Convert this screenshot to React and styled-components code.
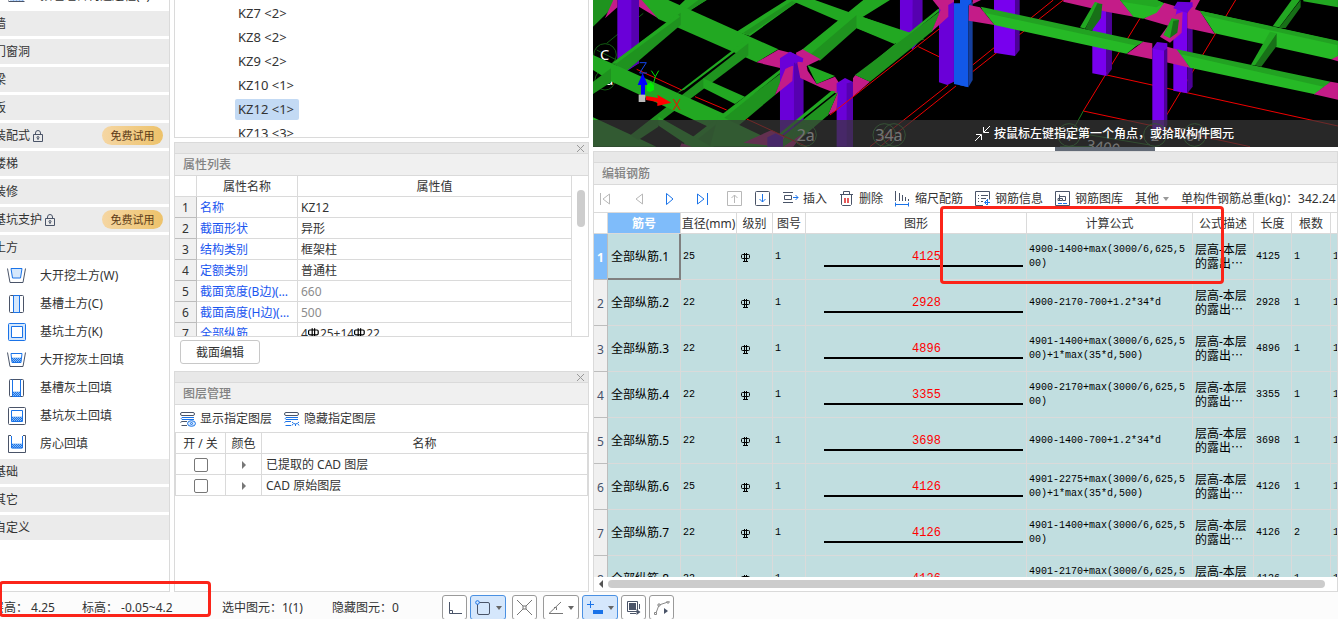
// src/App.jsx
import { useState } from 'react';
import styled, { createGlobalStyle } from 'styled-components';

const fonts = {
  ui: '"Noto Sans", "Noto Sans CJK SC", sans-serif',
  mono: '"Liberation Mono", "Noto Sans CJK SC", monospace',
};

const colors = {
  line: '#dadada',
  strip: '#e8e8e8',
  caption: '#f0f0f0',
  text: '#333333',
  link: '#1a56f0',
  blue: '#1a73e8',
  ink: '#4a5468',
  cell: '#c1dee0',
  mark: '#fb2419',
};

const GlobalStyle = createGlobalStyle`
  * { box-sizing: border-box; }
  body {
    margin: 0;
    background: #ffffff;
    color: ${colors.text};
    font-family: ${fonts.ui};
    font-size: 12px;
    line-height: 18px;
    overflow: hidden;
  }
  button, input { font: inherit; color: inherit; margin: 0; }
  button { cursor: pointer; }
  svg { display: block; flex: none; }
`;

const Page = styled.div`
  position: relative;
  height: 100vh;
  display: flex;
  flex-direction: column;
  overflow: hidden;
`;

const Main = styled.main`
  flex: 1;
  min-height: 0;
  display: grid;
  grid-template-columns: 170px 415px minmax(0, 1fr);
  grid-template-rows: minmax(0, 1fr);
  column-gap: 4px;
`;

const Column = styled.div`
  display: flex;
  flex-direction: column;
  min-width: 0;
  min-height: 0;
`;

/* component tree on the left */

const Sidebar = styled.nav`
  border-right: 1px solid ${colors.line};
  border-bottom: 1px solid ${colors.line};
  overflow: hidden;
`;

const SideList = styled.div`
  margin: -17px 0 0 -20px;
`;

const Category = styled.div`
  height: 25px;
  margin-bottom: 3px;
  padding: 0 6px 0 14px;
  display: flex;
  align-items: center;
  gap: 3px;
  background: #ebebeb;
`;

const Trial = styled.button`
  margin-left: auto;
  width: 61px;
  height: 19px;
  padding: 0;
  border: none;
  border-radius: 10px;
  background: linear-gradient(90deg, #f5d6a3, #edc26a);
  color: #5c3a17;
  font-size: 11px;
  line-height: 18px;
`;

const Tool = styled.button`
  height: 28px;
  width: 100%;
  padding: 0 0 3px 27px;
  border: none;
  background: none;
  display: flex;
  align-items: center;
  gap: 14px;
  text-align: left;
  white-space: nowrap;
`;

/* docked panels */

const Panel = styled.section`
  flex: ${props => props.$height ? `0 0 ${props.$height}px` : '1'};
  min-height: 0;
  display: flex;
  flex-direction: column;
  border: 1px solid ${colors.line};
  overflow: hidden;
`;

const Strip = styled.div`
  flex: none;
  height: 11px;
  padding-right: 4px;
  display: flex;
  align-items: center;
  justify-content: flex-end;
  background: ${colors.strip};
  border-bottom: 1px solid ${colors.line};
`;

const CloseButton = styled.button`
  padding: 0;
  border: none;
  background: none;
  color: #999999;
`;

const Caption = styled.h2`
  flex: none;
  height: 22px;
  margin: 0;
  padding-left: 8px;
  background: ${colors.caption};
  border-bottom: 1px solid ${colors.line};
  color: #828282;
  font-size: 12px;
  font-weight: 500;
  line-height: 22px;
`;

const TreePanel = styled.ul`
  flex: 0 0 138px;
  margin: 0 0 4px;
  padding: 1px 0 0 60px;
  border: 1px solid ${colors.line};
  border-top: none;
  list-style: none;
  overflow: hidden;
`;

const TreeItem = styled.li`
  height: 24px;
  display: flex;
  align-items: center;
  font-size: 13px;

  span {
    height: 21px;
    padding: 0 5px 0 3px;
    border-radius: 2px;
    background: ${props => props.$selected ? '#c3daf4' : 'none'};
    line-height: 21px;
  }
`;

const ScrollArea = styled.div`
  flex: 1;
  min-height: 0;
  display: flex;
  overflow: hidden;
`;

const Grid = styled.table`
  flex: 1;
  align-self: flex-start;
  width: 100%;
  table-layout: fixed;
  border-spacing: 0;

  th, td {
    height: 21px;
    padding: 1px 3px 0;
    border-right: 1px solid ${colors.line};
    border-bottom: 1px solid ${colors.line};
    font-weight: 400;
    line-height: 19px;
    white-space: nowrap;
    overflow: hidden;
    text-overflow: ellipsis;
  }
`;

const RowNumber = styled.td`
  background: ${colors.caption};
  border-color: #bdbdbd !important;
  text-align: center;
`;

const PropName = styled.td`
  color: ${colors.link};
`;

const PropValue = styled.td`
  color: ${props => props.$muted ? '#8c8c8c' : colors.text};

  svg { display: inline-block; vertical-align: -1px; }
`;

const VerticalScroll = styled.div`
  flex: 0 0 16px;
  padding: 14px 3px 0 5px;

  &::before {
    content: '';
    display: block;
    height: 37px;
    border-radius: 4px;
    background: #cdcdcd;
  }
`;

const ActionBar = styled.div`
  flex: none;
  height: 34px;
  padding: 3px 6px 0;
`;

const PlainButton = styled.button`
  width: 80px;
  height: 24px;
  padding: 1px 0 0;
  border: 1px solid #c8c8c8;
  border-radius: 3px;
  background: #ffffff;
`;

const Toolbar = styled.div`
  flex: none;
  height: 28px;
  padding: 1px 5px 0;
  display: flex;
  align-items: center;
  gap: 12px;
  border-bottom: 1px solid ${colors.line};
  white-space: nowrap;
  overflow: hidden;
`;

const Pager = styled.div`
  display: flex;
  gap: 16px;
`;

const ToolButton = styled.button`
  flex: none;
  padding: 0;
  border: none;
  background: none;
  display: flex;
  align-items: center;
  gap: 4px;
`;

const LayerGrid = styled(Grid)`
  flex: none;
  align-self: stretch;
  border-left: 1px solid ${colors.line};
`;

const CenterCell = styled.td`
  text-align: center;

  svg { margin: 0 auto; }
`;

const LayerName = styled.td`
  && { padding-left: 4px; }
`;

const CheckBox = styled.input`
  appearance: none;
  display: block;
  width: 14px;
  height: 14px;
  margin: 0 auto;
  border: 1px solid #777777;
  border-radius: 2px;
  background: #ffffff;

  &:checked { background: ${colors.blue}; }
`;

/* model view */

const Viewport = styled.div`
  flex: 0 0 147px;
  position: relative;
  background: #000000;
  overflow: hidden;

  > svg { width: 100%; height: 147px; }
`;

const Hint = styled.div`
  position: absolute;
  left: 0;
  right: 0;
  bottom: 0;
  height: 27px;
  padding-left: 381px;
  display: flex;
  align-items: center;
  gap: 3px;
  background: rgba(57, 57, 57, 0.7);
  color: #ffffff;
  font-weight: 500;
  white-space: nowrap;
`;

const Splitter = styled.div`
  flex: 0 0 4px;
  width: 100px;
  margin-left: 462px;
  background: #626a76;
`;

/* rebar table */

const RebarGrid = styled.table`
  width: 790px;
  table-layout: fixed;
  border-spacing: 0;

  th {
    height: 21px;
    padding: 1px 0 0;
    border-right: 1px solid ${colors.line};
    border-bottom: 1px solid ${colors.line};
    font-weight: 400;
    line-height: 19px;
    white-space: nowrap;
  }

  td {
    height: 46px;
    padding: 0 2px;
    border-right: 1px solid ${colors.line};
    border-bottom: 1px solid ${colors.line};
    background: ${colors.cell};
    color: #000000;
    overflow: hidden;
  }
`;

const ActiveHead = styled.th`
  background: #7fbcfa;
  color: #ffffff;
  font-weight: 700 !important;
`;

const Index = styled.th`
  && {
    height: 46px;
    border-color: #bdbdbd;
    background: ${props => props.$active ? '#7fbcfa' : colors.caption};
    color: ${props => props.$active ? '#ffffff' : '#44506a'};
    font-weight: ${props => props.$active ? 700 : 400};
    font-size: 12px;
  }
`;

const BarName = styled.td`
  && {
    padding: 0 3px;
    border-color: ${props => props.$active ? '#808080' : colors.line};
    box-shadow: ${props => props.$active ? 'inset -1px -1px 0 #808080' : 'none'};
    white-space: nowrap;
  }
`;

const Mono = styled.td`
  font-family: ${fonts.mono};
  font-size: 10px;
  line-height: 14px;
  word-break: break-all;
`;

const GradeCell = styled.td`
  && { padding-left: 4px; }
`;

const ShapeCell = styled.td`
  && { padding: 0 3px 0 18px; }
`;

const BarShape = styled.div`
  height: 20px;
  padding-left: 6px;
  border-bottom: 2px solid #000000;
  color: #ff0000;
  font-family: ${fonts.mono};
  font-size: 12px;
  line-height: 20px;
  text-align: center;
`;

const Description = styled.td`
  font-size: 12px;
  line-height: 14px;
`;

const HorizontalScroll = styled.div`
  flex: 0 0 14px;
  padding: 0 12px 0 5px;
  display: flex;
  align-items: center;
  gap: 5px;

  &::after {
    content: '';
    flex: 1;
    height: 8px;
    border-radius: 4px;
    background: #cccccc;
  }
`;

/* status bar */

const StatusBar = styled.footer`
  flex: 0 0 27px;
  padding-top: 3px;
  display: flex;
  background: #fcfcfc;
  line-height: 26px;
  white-space: nowrap;
  overflow: hidden;
`;

const Status = styled.span`
  flex: 0 0 ${props => props.$width}px;
`;

const StatusShift = styled.div`
  display: flex;
  flex: none;
  margin-left: -8px;
`;

const SnapBar = styled.div`
  display: flex;
  gap: 6px;
`;

const SnapGroup = styled.div`
  display: flex;
  gap: 3px;
`;

const SnapButton = styled.button`
  width: ${props => props.$menu ? 36 : 25}px;
  height: 25px;
  padding: 0;
  display: flex;
  align-items: center;
  justify-content: center;
  gap: 5px;
  border: 1px solid ${props => props.$on ? '#4a90e2' : '#9a9a9a'};
  border-radius: 3px;
  background: ${props => props.$on ? '#d5e7fc' : '#ffffff'};
`;

const Marker = styled.div`
  position: absolute;
  border: 3px solid ${colors.mark};
  border-radius: 4px;
  pointer-events: none;
`;

const FormulaMarker = styled(Marker)`
  left: 940px;
  top: 206px;
  width: 284px;
  height: 78px;
`;

const LevelMarker = styled(Marker)`
  left: -1px;
  bottom: 2px;
  width: 212px;
  height: 36px;
`;

const categories = [
  { name: '墙' },
  { name: '门窗洞' },
  { name: '梁' },
  { name: '板' },
  { name: '装配式', locked: true },
  { name: '楼梯' },
  { name: '装修' },
  { name: '基坑支护', locked: true },
  { name: '土方' },
];

const earthTools = [
  { name: '大开挖土方(W)', icon: 'pitOpen' },
  { name: '基槽土方(C)', icon: 'trench' },
  { name: '基坑土方(K)', icon: 'pit' },
  { name: '大开挖灰土回填', icon: 'pitOpenFill' },
  { name: '基槽灰土回填', icon: 'trenchFill' },
  { name: '基坑灰土回填', icon: 'pitFill' },
  { name: '房心回填', icon: 'room' },
];

const columns = ['KZ7 <2>', 'KZ8 <2>', 'KZ9 <2>', 'KZ10 <1>', 'KZ12 <1>', 'KZ13 <3>'];

const properties = [
  { name: '名称', value: 'KZ12' },
  { name: '截面形状', value: '异形' },
  { name: '结构类别', value: '框架柱' },
  { name: '定额类别', value: '普通柱' },
  { name: '截面宽度(B边)(mm)', value: '660', muted: true },
  { name: '截面高度(H边)(mm)', value: '500', muted: true },
];

const rebars = [
  { d: 25, length: 4125, formula: '4900-1400+max(3000/6,625,500)', count: 1 },
  { d: 22, length: 2928, formula: '4900-2170-700+1.2*34*d', count: 1 },
  { d: 22, length: 4896, formula: '4901-1400+max(3000/6,625,500)+1*max(35*d,500)', count: 1 },
  { d: 22, length: 3355, formula: '4900-2170+max(3000/6,625,500)', count: 1 },
  { d: 22, length: 3698, formula: '4900-1400-700+1.2*34*d', count: 1 },
  { d: 25, length: 4126, formula: '4901-2275+max(3000/6,625,500)+1*max(35*d,500)', count: 1 },
  { d: 22, length: 4126, formula: '4901-1400+max(3000/6,625,500)', count: 2 },
  { d: 22, length: 4126, formula: '4901-2170+max(3000/6,625,500)+1*max(35*d,500)', count: 1 },
];

const Lock = () => (
  <svg width="10" height="12" viewBox="0 0 10 12" fill="none" stroke={colors.ink}>
    <path d="M.5 4.5h9v7h-9zM2.5 4.5V3a2.5 2.5 0 0 1 5 0v1.5M5 8v2" />
    <circle cx="5" cy="7.5" r="1" />
  </svg>
);

const Hatch = ({ x, y, w }) => (
  <>
    <path d={`M${x} ${y - 1}h${w}v5h-${w}z`} fill="#8bbcf5" stroke="none" />
    <path
      d={`M${x} ${y}h${w}M${x + 1} ${y + 1}h${w - 1}M${x} ${y + 2}h${w}M${x + 1} ${y + 3}h${w - 1}`}
      stroke={colors.blue}
      strokeDasharray="1 1"
    />
  </>
);

function ToolIcon({ type }) {
  return (
    <svg width="19" height="18" viewBox="0 0 19 18" fill="none" stroke={colors.ink}>
      {type === 'pitOpen' && (
        <>
          <path d="M.5 1.500L3 15.500h13L18.500 1.500" />
          <path d="M4 1.500h11l-1.500 9.500h-8z" fill="#d6e8fc" stroke={colors.blue} />
        </>
      )}
      {type === 'trench' && (
        <>
          <rect x="2.500" y=".5" width="14" height="17" rx="1" />
          <path d="M6.500.5h6v17h-6z" fill="#d6e8fc" stroke={colors.blue} />
        </>
      )}
      {type === 'pit' && (
        <g stroke={colors.blue}>
          <rect x="1.500" y=".5" width="17" height="17" rx="1" fill="#d6e8fc" />
          <path d="M4.500 3.500h11v11h-11z" fill="#fff" />
        </g>
      )}
      {type === 'pitOpenFill' && (
        <>
          <path d="M.5 1.500L3 15.500h13L18.500 1.500" />
          <Hatch x={5} y={7.5} w={9} />
          <path d="M4 2.500h11l-1 9H5z" stroke={colors.blue} />
        </>
      )}
      {type === 'trenchFill' && (
        <>
          <rect x="2.500" y=".5" width="14" height="17" rx="1" />
          <Hatch x={6} y={13.5} w={7} />
          <path d="M5.500.5v17h8V.5" stroke={colors.blue} />
        </>
      )}
      {type === 'pitFill' && (
        <>
          <rect x="1.500" y=".5" width="17" height="17" rx="1" />
          <Hatch x={5} y={10.5} w={10} />
          <path d="M4.500 3.500h11v11h-11z" stroke={colors.blue} />
        </>
      )}
      {type === 'room' && (
        <>
          <path d="M4 .5H1.500v17h17V.5H16" />
          <Hatch x={5} y={9.5} w={10} />
          <path d="M4.500 1v12h11V1" stroke={colors.blue} />
        </>
      )}
      {type === 'solid' && (
        <>
          <path d="M3 3h13v9H3z" fill="#8bbcf5" stroke="none" />
          <path d="M3 9.500h13M4 10.500h13M3 11.500h13M3.500 3v10h13V3" stroke={colors.blue} strokeDasharray="2 1" />
          <path d="M1.500 3v10.500M1.500 14.500h16" />
        </>
      )}
    </svg>
  );
}

// HRB400 rebar grade sign
const Grade = ({ size = 10 }) => (
  <svg width={size} height={size} viewBox="0 0 10 10" fill="none" stroke="#000">
    <rect x=".5" y="2.500" width="8" height="4" rx="1" />
    <path d="M3.500 1v8M5.500 1v8M2 9.500h5" />
  </svg>
);

const Caret = ({ color = '#666666' }) => (
  <svg width="6" height="4" viewBox="0 0 6 4"><path d="M0 0h6L3 4z" fill={color} /></svg>
);

const Close = () => (
  <svg width="7" height="7" viewBox="0 0 7 7" stroke="currentColor"><path d="M0 0l7 7M7 0L0 7" /></svg>
);

const Layers = ({ hidden }) => (
  <svg width="16" height="15" viewBox="0 0 16 15" fill="none" stroke={colors.ink}>
    <rect x=".5" y=".5" width="14" height="3" rx="1.500" />
    <path d="M14 5.500H2q-1.500 1 0 2h12" stroke={colors.blue} />
    <path d="M7 9.500H2q-1.500.5-1.500 1M7 13.500H1.500" stroke={hidden ? colors.blue : colors.ink} />
    {hidden
      ? <path d="M8 10q3.500 4 7 0M9 12l-1 1.500M11.500 12v2M14 12l1 1.500" stroke={colors.blue} />
      : <g stroke={colors.blue}><ellipse cx="11.500" cy="11.500" rx="4" ry="2.800" fill="#d6e8fc" /><circle cx="11.500" cy="11.500" r="1" /></g>}
  </svg>
);

const pagerIcons = [
  { label: '首条', stroke: '#b8b8b8', d: 'M1.500 2v12M10.500 3v10L4 8z' },
  { label: '上一条', stroke: '#b8b8b8', d: 'M11.500 3v10L5 8z' },
  { label: '下一条', stroke: colors.blue, d: 'M3.500 2.500v11L10 8z' },
  { label: '末条', stroke: colors.blue, d: 'M2.500 3v10L9 8zM12.500 2v12' },
  { label: '上移', stroke: '#b8b8b8', d: 'M.5.5h14v14H.5zM7.500 12V4M4.500 7l3-3 3 3' },
];

const rebarActions = [
  {
    label: '插入',
    icon: (
      <>
        <path d="M0 1.500h10M0 11.500h10M1.500 4.500h7v4h-7z" />
        <path d="M10 6.500h5M12.500 4l2.500 2.500L12.500 9" stroke={colors.blue} />
      </>
    ),
  },
  {
    label: '删除',
    icon: (
      <>
        <path d="M1 3.500h13M4.500 3.500v-3h6v3M2.500 3.500v10l1 1h8l1-1v-10" />
        <path d="M6 7v5M9 7v5" stroke="#d22" strokeWidth="1.500" />
      </>
    ),
  },
  {
    label: '缩尺配筋',
    icon: (
      <>
        <path d="M.5 0v10M4.500 2v8M7.500 4v6M10.500 6v4M13.500 8v2" />
        <path d="M1 13.500h13M.5 11.500v4M13.500 11.500v4" stroke={colors.blue} />
      </>
    ),
  },
  {
    label: '钢筋信息',
    icon: (
      <>
        <path d="M8 14.500H.5V.5h14v8M3 4.500h1M6 4.500h7M3 7.500h1M6 7.500h5M3 10.500h1M6 10.500h2" />
        <path d="M12.500 8v6M15 11.500h-5M12 9l-2.500 2.500L12 14" stroke={colors.blue} />
      </>
    ),
  },
  {
    label: '钢筋图库',
    icon: (
      <>
        <path d="M.5.5h14v14H.5zM4.500 9.500V3.500M4.500 5.500h6v4h-2.500M3 7.500h4.500v2H3z" />
        <path d="M3 12.500h4M8 12.500h4" stroke={colors.blue} />
      </>
    ),
  },
];

// Structural frame seen from above; each half keeps its own drawing units
function Model() {
  const green = '#22a822';
  const side = '#1f931f';
  const bright = '#26b926';
  const deep = '#187018';
  const joint = '#c41c88';
  const violet = '#6a00d8';
  const violetSide = '#5600b0';
  const column = '#7800ee';
  const columnSide = '#4c0096';

  return (
    <svg viewBox="0 0 745 147" preserveAspectRatio="xMinYMin slice" role="img" aria-label="三维模型">
      <g transform="translate(-3 0) scale(.3333)">
        <g fill="none" stroke="#125a12" strokeWidth="3">
          <circle cx="45" cy="165" r="34" />
          <circle cx="45" cy="240" r="30" />
          <path d="M50 130l110-90M20 150l60 30" />
        </g>
        <g fill="#fff" fontFamily="Noto Sans" fontSize="44">
          <text x="30" y="181">C</text>
          <text x="46" y="256">a</text>
        </g>
        <path fill={violet} d="M82 0h65v190l-35 22-30-10z" />
        <path fill={violetSide} d="M124 0h23v190l-23 12z" />
        <path fill={side} d="M0 0h45L0 40zM9 25L45 0h30L55 35 9 80z" />
        <path fill={joint} d="M70 0h12v22L45 55zM147 0h38l23 57-61-37z" />
        <path fill={green} d="M262 22L285 0h65l-70 45zM440 95L590 0h40L480 108z" />
        <path fill={side} d="M300 30L350 0h-25l-50 38zM475 105L630 0h-20L460 98z" />
        <path fill={green} d="M155 0h80l330 148-65 39-295-130z" />
        <path fill={side} d="M272 38v37L110 213 65 190z" />
        <path fill={green} d="M262 42l8 8L80 190l-12-2z" />
        <path fill={side} d="M475 130v36L150 410h-35z" />
        <path fill={green} d="M470 128L285 268l-25 12 205-158z" />
        <path fill={green} d="M340 235l125 55-30 22-95-48zM9 165l56 25 345 155-55 35-290-135-56-35z" />
        <path fill={side} d="M9 245l54-40v42L9 282z" />
        <path fill={side} d="M589 208l-34 77-185 155h-90z" />
        <path fill={green} d="M575 205l10 3-290 232h-25z" />
        <path fill={green} d="M600 0h75l330 118-90 12-115-46-25-8z" />
        <path fill={green} d="M820 0h80L800 62l-110 98-20 14-35-24z" />
        <path fill={side} d="M800 45v40L690 182l-30-18z" />
        <path fill={violet} d="M930 0h67v110l-30 40-22-50-15-5z" />
        <path fill={violetSide} d="M968 0h29v110l-30 35z" />
        <path fill={green} d="M800 45l165 55-52 32-113-47z" />
        <path fill={violet} d="M570 175l30-20 40 20v230h-70z" />
        <path fill={violetSide} d="M612 190l28-12v225h-28z" />
        <path fill={joint} d="M500 187l65-38 38 10-33 20v25zM618 158l20-10 54 30-42 20 3 14 27 40 55-22 12 18-4 34-52-20-60-28-8-40z" />
        <path fill={joint} d="M586 207l24-12-3 48-52 42z" />
        <path fill={violet} d="M570 175l30-20 40 20-2 12-14-2-12 12-28 5-2 8-12-5z" />
        <path fill={violetSide} d="M612 188h4v54l-4 5z" />
        <path fill={green} d="M652 195l83 33-55 24z" />
        <path fill={violet} d="M740 250l25-16 24 12v194h-49z" />
        <path fill={violetSide} d="M770 250l19-5v195h-19z" />
        <path fill={joint} d="M744 276l-4 55-26 14zM796 225l44 20-51 45v-55z" />
        <path fill={side} d="M744 276l-30 70-110 94h-65z" />
        <path fill={green} d="M738 275L550 425l-30 15 205-168z" />
        <path fill={green} d="M1052 30L840 200l-40 26 245-200z" />
        <path fill={side} d="M1052 32l-25 62-187 151-45-20z" />
        <path fill={violet} d="M1047 20l45-20v245l-20 10-25-8z" />
        <path fill={joint} d="M1028 0h64v5l-17 10v35l-50 45 27-65z" />
        <path fill="#1258e8" d="M1092 10h40v250l-40-8z" />
        <path fill={green} d="M9 352l130 60 60 28H9zM205 350l160 90h-65l-105-70zM385 345l200 95H360z" />
        <path fill={side} d="M205 350v30l-60 40-20-12z" />
        <path fill={joint} d="M545 390l40 20-20 30-105-12zM275 430l30 10h-35zM640 400l-30 40h-30z" />
        <path fill={violet} d="M532 412l25-12 22 12v28h-47z" />
        <g stroke="#f00000" strokeWidth="3" fill="none">
          <path d="M140 208l135 62M315 290l95 40M470 357l180 83M985 140l62 30M1050 85L720 345M1075 255L840 440M1098 258L870 440" />
        </g>
        <g fill="none" stroke="#2c8c2c" strokeWidth="3">
          <circle cx="645" cy="405" r="34" />
          <circle cx="883" cy="405" r="34" />
          <circle cx="912" cy="405" r="34" />
        </g>
        <g fill="#fff" fontFamily="Noto Sans" fontSize="48">
          <text x="620" y="424">2a</text>
          <text x="856" y="424">34a</text>
        </g>
        <path fill="#0000ff" d="M153 290v-35h-10l15-36 15 36h-8v35z" />
        <path fill="#ff0000" d="M168 288l36 6-2-10 42 24-42 10v-12l-34-6z" />
        <path fill="#00f000" d="M170 255l12-9 10 10v14l-12 6-10-4z" />
        <path fill="#bbbbbb" d="M146 284h20v22h-20z" />
        <g fill="none" strokeWidth="3">
          <path stroke="#1144ee" d="M149 188h20l-20 31h22" />
          <path stroke="#00e000" d="M184 212l12 18 10-18M196 230l-6 22" />
          <path stroke="#ff0000" d="M250 297l20 33M270 297l-20 33" />
        </g>
      </g>
      <g transform="translate(367 0) scale(.3333)">
        <g stroke="#f00000" strokeWidth="3" fill="none">
          <path d="M280 0L38 195M310 0L38 215M827 0L620 345M540 55L370 333l500 107M440 225l694 153" />
        </g>
        <path stroke="#1d7a1d" strokeWidth="3" fill="none" d="M370 333l-30 55M360 400l210 35M300 440h100" />
        <path fill={column} d="M102 0h63v168l-63-10z" />
        <path fill={columnSide} d="M165 0h14v150l-14 18z" />
        <path fill={column} d="M397 0h43v228l-43-8z" />
        <path fill={columnSide} d="M440 0v228l16-21V0z" />
        <path fill={column} d="M640 25h42v255l-42-8z" />
        <path fill={columnSide} d="M682 25h16v235l-16 20z" />
        <path fill={bright} d="M66 28l470 104-36 29-397-86z" />
        <path fill="#22a222" d="M62 20l490 105-22 12L72 38z" />
        <path fill="#1258e8" d="M0 0h35v8l-10 10v244l-25-6z" />
        <path fill="#153f9c" d="M25 15L38 5v235l-13 22z" />
        <path fill={joint} d="M27 15l33 7 43 53-77-13zM38 0h25L38 12zM550 125l27 5v48l-77-16zM612 138l38 10 40 55-78-18z" />
        <path fill={joint} d="M310 0h170l42 50-82-15-130-30zM612 8l40 12-12 62-88-26zM692 0h28l-15 28 15 5 45 70-83-18V40z" />
        <path fill={bright} d="M480 0h110l22 10-22 28-40 18-30-6z" />
        <path fill={green} d="M480 0h110l22 10-22 12-100-16z" />
        <path fill={green} d="M405 5l12 5-42 76-15-4z" />
        <path fill={deep} d="M412 10l15 2-4 42-28 38-20-4z" />
        <path fill={violet} d="M640 25l12-20 46 2v12l-16 20z" />
        <path fill={joint} d="M650 42l18-6-3 62-35 30-30-18z" />
        <path fill={green} d="M635 55l22 4-27 56-20-10z" />
        <path fill={deep} d="M640 62l17-2-5 38-22 16z" />
        <path fill={bright} d="M652 150l455 98-42 35-375-80z" />
        <path fill="#22a222" d="M650 148l462 97-18 16-432-98z" />
        <path fill={bright} d="M720 32l414 92v50l-20 4-350-78z" />
        <path fill="#22a222" d="M720 32l414 90v14L728 46z" />
        <path fill={green} d="M995 0h25l-62 82-20-3z" />
        <path fill={deep} d="M1022 0v22l-45 62h-20zM950 100v38l-46 62-28-6z" />
        <path fill={green} d="M930 95l20 5-65 96-12-2z" />
        <path fill={green} d="M1030 0h104v22l-104-18z" />
        <path fill={joint} d="M1112 245l22 4v50l-72-16zM1134 168v16l-20-6z" />
        <path fill={column} d="M577 145h35v245h-35z" />
        <path fill={columnSide} d="M612 145h10v230l-10 15z" />
        <path fill={violet} d="M577 146l14-20 31 4v14l-10 8z" />
        <g fill="none" stroke="#2c8c2c" strokeWidth="3">
          <circle cx="327" cy="405" r="34" />
          <circle cx="585" cy="405" r="34" />
          <circle cx="704" cy="405" r="34" />
        </g>
        <g fill="#fff" fontFamily="Noto Sans" fontSize="44">
          <text x="314" y="424">1</text>
          <text x="572" y="424">2</text>
          <text x="678" y="424">01</text>
          <text x="378" y="450" transform="rotate(8 378 450)">3400</text>
        </g>
      </g>
    </svg>
  );
}

function RebarTable() {
  return (
    <RebarGrid>
      <colgroup>
        {[14, 73, 56, 36, 33, 221, 166, 61, 38, 39, 53].map((w, i) => <col key={i} width={w} />)}
      </colgroup>
      <thead>
        <tr>
          <th />
          <ActiveHead>筋号</ActiveHead>
          <th>直径(mm)</th>
          <th>级别</th>
          <th>图号</th>
          <th>图形</th>
          <th>计算公式</th>
          <th>公式描述</th>
          <th>长度</th>
          <th>根数</th>
          <th />
        </tr>
      </thead>
      <tbody>
        {rebars.map((bar, i) => (
          <tr key={i}>
            <Index $active={i === 0}>{i + 1}</Index>
            <BarName $active={i === 0}>全部纵筋.{i + 1}</BarName>
            <Mono>{bar.d}</Mono>
            <GradeCell><Grade /></GradeCell>
            <Mono>1</Mono>
            <ShapeCell><BarShape>{bar.length}</BarShape></ShapeCell>
            <Mono>{bar.formula}</Mono>
            <Description>层高-本层的露出⋯</Description>
            <Mono>{bar.length}</Mono>
            <Mono>{bar.count}</Mono>
            <Mono>1</Mono>
          </tr>
        ))}
      </tbody>
    </RebarGrid>
  );
}

function App() {
  const [selected, setSelected] = useState('KZ12 <1>');

  return (
    <Page>
      <GlobalStyle />
      <Main>
        <Sidebar>
          <SideList>
            <Tool><ToolIcon type="solid" />预埋组合构造边柱(Z)</Tool>
            {categories.map(c => (
              <Category key={c.name}>
                {c.name}
                {c.locked && <Lock />}
                {c.locked && <Trial>免费试用</Trial>}
              </Category>
            ))}
            {earthTools.map(t => (
              <Tool key={t.name}><ToolIcon type={t.icon} />{t.name}</Tool>
            ))}
            <Category>基础</Category>
            <Category>其它</Category>
            <Category>自定义</Category>
          </SideList>
        </Sidebar>

        <Column>
          <TreePanel>
            {columns.map(name => (
              <TreeItem key={name} $selected={name === selected} onClick={() => setSelected(name)}>
                <span>{name}</span>
              </TreeItem>
            ))}
          </TreePanel>
          <Panel $height={195}>
            <Strip><CloseButton aria-label="关闭属性列表"><Close /></CloseButton></Strip>
            <Caption>属性列表</Caption>
            <ScrollArea>
              <Grid>
                <colgroup><col width="22" /><col width="101" /><col /></colgroup>
                <thead>
                  <tr><th /><th>属性名称</th><th>属性值</th></tr>
                </thead>
                <tbody>
                  {properties.map((p, i) => (
                    <tr key={p.name}>
                      <RowNumber>{i + 1}</RowNumber>
                      <PropName>{p.name}</PropName>
                      <PropValue $muted={p.muted}>{p.value}</PropValue>
                    </tr>
                  ))}
                  <tr>
                    <RowNumber>7</RowNumber>
                    <PropName>全部纵筋</PropName>
                    <PropValue>4<Grade size={12} />25+14<Grade size={12} />22</PropValue>
                  </tr>
                </tbody>
              </Grid>
              <VerticalScroll />
            </ScrollArea>
          </Panel>
          <ActionBar><PlainButton>截面编辑</PlainButton></ActionBar>
          <Panel>
            <Strip><CloseButton aria-label="关闭图层管理"><Close /></CloseButton></Strip>
            <Caption>图层管理</Caption>
            <Toolbar>
              <ToolButton><Layers />显示指定图层</ToolButton>
              <ToolButton><Layers hidden />隐藏指定图层</ToolButton>
            </Toolbar>
            <LayerGrid>
              <colgroup><col width="50" /><col width="36" /><col /></colgroup>
              <thead>
                <tr><th>开 / 关</th><th>颜色</th><th>名称</th></tr>
              </thead>
              <tbody>
                {['已提取的 CAD 图层', 'CAD 原始图层'].map(name => (
                  <tr key={name}>
                    <td><CheckBox type="checkbox" aria-label={name} /></td>
                    <CenterCell>
                      <svg width="4" height="8" viewBox="0 0 4 8"><path d="M0 0l4 4-4 4z" fill="#777" /></svg>
                    </CenterCell>
                    <LayerName>{name}</LayerName>
                  </tr>
                ))}
              </tbody>
            </LayerGrid>
          </Panel>
        </Column>

        <Column>
          <Viewport>
            <Model />
            <Hint>
              <svg width="17" height="17" viewBox="0 0 17 17" fill="none" stroke="#fff">
                <path d="M16 1l-6 6M9.500 2v5.500H15M1 16l6-6M2 9.500h5.500V15" />
              </svg>
              按鼠标左键指定第一个角点，或拾取构件图元
            </Hint>
          </Viewport>
          <Splitter />
          <Panel>
            <Strip />
            <Caption>编辑钢筋</Caption>
            <Toolbar>
              <Pager>
                {pagerIcons.map(p => (
                  <ToolButton key={p.label} aria-label={p.label}>
                    <svg width="16" height="16" viewBox="0 0 16 16" fill="none" stroke={p.stroke}>
                      <path d={p.d} />
                    </svg>
                  </ToolButton>
                ))}
              </Pager>
              <ToolButton aria-label="下移">
                <svg width="16" height="16" viewBox="0 0 16 16" fill="none" stroke={colors.ink}>
                  <rect x=".5" y=".5" width="14" height="14" rx="1" />
                  <path d="M7.500 3v8M4.500 8l3 3 3-3" stroke={colors.blue} />
                </svg>
              </ToolButton>
              {rebarActions.map(a => (
                <ToolButton key={a.label}>
                  <svg width="16" height="16" viewBox="0 0 16 16" fill="none" stroke={colors.ink}>{a.icon}</svg>
                  {a.label}
                </ToolButton>
              ))}
              <ToolButton>其他 <Caret color="#999999" /></ToolButton>
              <span>单构件钢筋总重(kg)：342.24</span>
            </Toolbar>
            <ScrollArea><RebarTable /></ScrollArea>
            <HorizontalScroll>
              <svg width="4" height="8" viewBox="0 0 4 8"><path d="M4 0v8L0 4z" fill="#555" /></svg>
            </HorizontalScroll>
          </Panel>
        </Column>
      </Main>

      <StatusBar>
        <StatusShift>
          <Status $width={90}>层高： 4.25</Status>
          <Status $width={140}>标高： -0.05~4.2</Status>
          <Status $width={110}>选中图元：1(1)</Status>
          <Status $width={110}>隐藏图元：0</Status>
        </StatusShift>
        <SnapBar>
          <SnapGroup>
            <SnapButton aria-label="正交">
              <svg width="14" height="14" viewBox="0 0 14 14" fill="none" stroke={colors.ink}>
                <path d="M1.500 1v11.500H14M1.500 9.500h3v3" />
              </svg>
            </SnapButton>
            <SnapButton $menu $on aria-label="对象捕捉">
              <svg width="16" height="16" viewBox="0 0 16 16" fill="none" stroke={colors.ink}>
                <rect x="2.500" y="2.500" width="12" height="12" rx="1.500" />
                <circle cx="2.500" cy="2.500" r="1.800" fill="#d5e7fc" stroke={colors.blue} />
              </svg>
              <Caret />
            </SnapButton>
          </SnapGroup>
          <SnapButton aria-label="交点捕捉">
            <svg width="15" height="15" viewBox="0 0 15 15" fill="none" stroke="#777">
              <path d="M0 0l6 6M9 9l6 6M15 0L9 6M6 9l-6 6M6 6h3v3H6z" />
            </svg>
          </SnapButton>
          <SnapGroup>
            <SnapButton $menu aria-label="角度捕捉">
              <svg width="15" height="14" viewBox="0 0 15 14" fill="none" stroke="#777">
                <path d="M13 1L1 12.500h14M6 6.500h2.500V9" />
              </svg>
              <Caret />
            </SnapButton>
            <SnapButton $menu $on aria-label="动态输入">
              <svg width="16" height="14" viewBox="0 0 16 14" fill="none" stroke={colors.blue}>
                <path d="M3.500 0v7M0 3.500h7" />
                <path d="M6 9h10v4H6z" fill={colors.blue} stroke="none" />
              </svg>
              <Caret />
            </SnapButton>
            <SnapButton aria-label="选择图元">
              <svg width="14" height="14" viewBox="0 0 14 14" fill="none" stroke={colors.ink}>
                <path d="M.5.5h10v10H.5zM12.500 3v5M3 12.500h6" />
                <path d="M2 2h7v7H2zM9.500 8v6l4-3z" fill={colors.ink} stroke="none" />
              </svg>
            </SnapButton>
            <SnapButton aria-label="折线选择">
              <svg width="16" height="14" viewBox="0 0 16 14" fill="none" stroke="#888">
                <path d="M2 12L5 4l9-3" />
                <path d="M.5 11.500h2v2h-2zM4 3h2v2H4zM13 0h2v2h-2z" fill="#fff" />
                <path d="M10 7v6l4-3z" fill={colors.ink} stroke="none" />
              </svg>
            </SnapButton>
          </SnapGroup>
        </SnapBar>
      </StatusBar>

      <FormulaMarker />
      <LevelMarker />
    </Page>
  );
}

export default App;
